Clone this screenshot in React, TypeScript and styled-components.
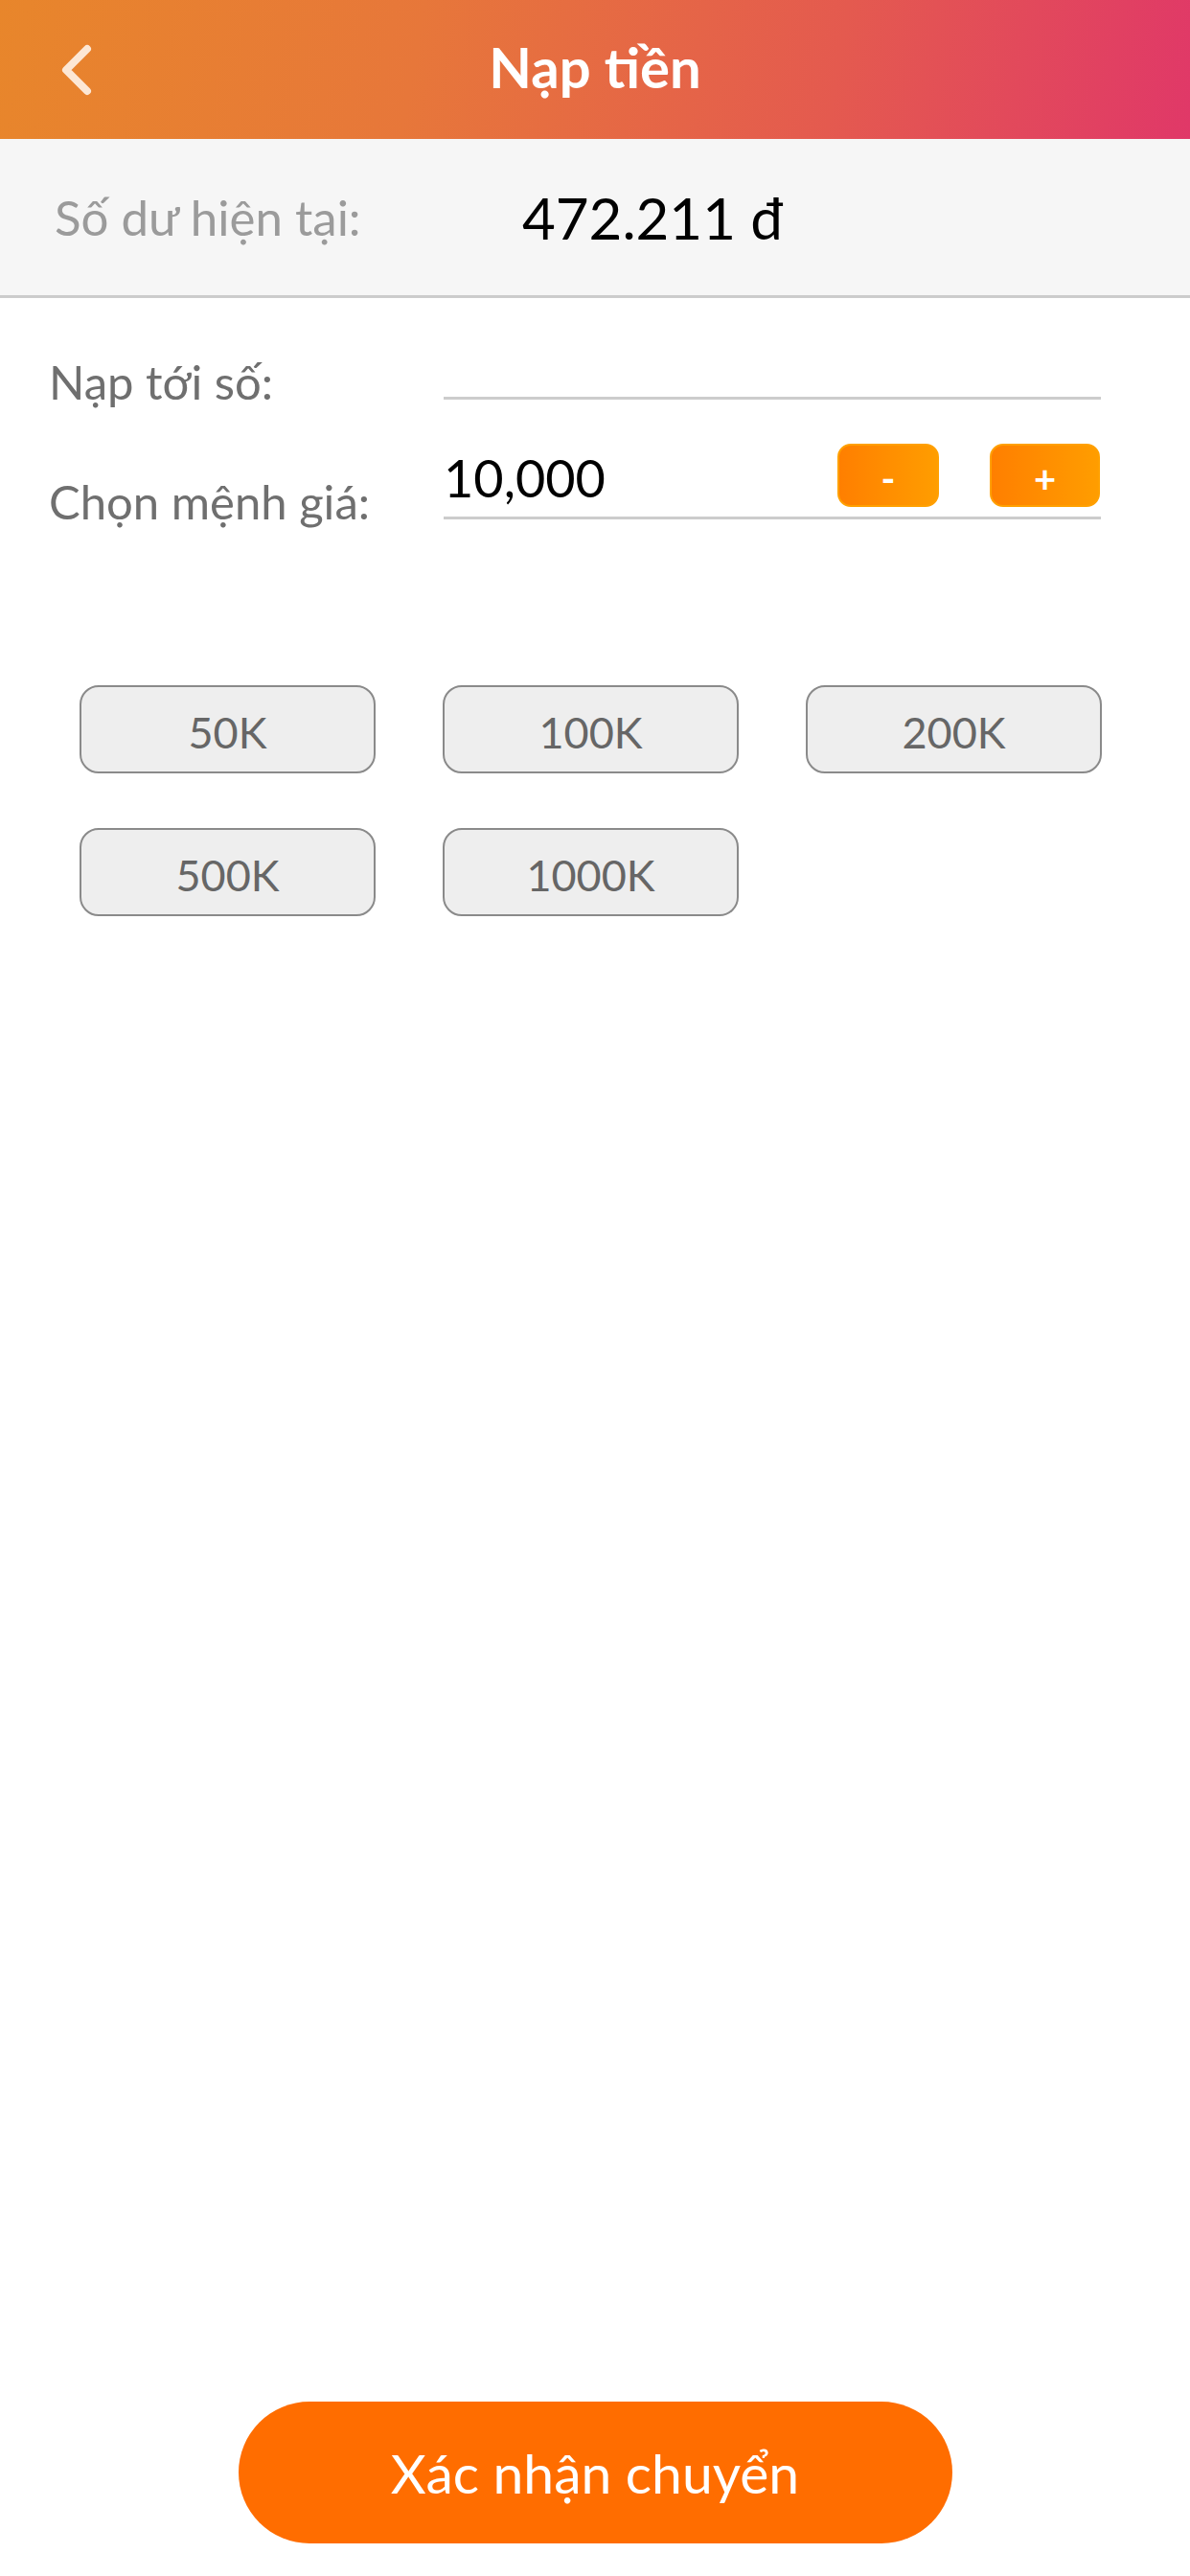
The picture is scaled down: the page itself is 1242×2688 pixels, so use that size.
import styled, { createGlobalStyle } from 'styled-components'

const GlobalStyle = createGlobalStyle`
  html, body {
    margin: 0;
    padding: 0;
    background: #ffffff;
  }
  * {
    box-sizing: border-box;
  }
`

const Screen = styled.div`
  width: 1242px;
  min-height: 2688px;
  display: flex;
  flex-direction: column;
  background: #ffffff;
  font-family: Lato, 'Noto Sans', sans-serif;
`

const Header = styled.header`
  height: 145px;
  display: grid;
  grid-template-columns: 160px 1fr 160px;
  align-items: center;
  background: linear-gradient(100deg, #e8862b 0%, #e7773a 35%, #e45a4f 70%, #e03868 100%);
`

const BackButton = styled.button`
  border: none;
  background: none;
  padding: 0 0 0 60px;
  height: 100%;
  display: flex;
  align-items: center;
  cursor: pointer;
`

const Title = styled.h1`
  margin: 0;
  text-align: center;
  color: #ffffff;
  font-size: 58px;
  font-weight: 700;
  padding-bottom: 6px;
`

const BalanceRow = styled.div`
  height: 166px;
  display: grid;
  grid-template-columns: 488px 1fr;
  align-items: center;
  padding: 0 0 0 57px;
  background: #f6f6f6;
  border-bottom: 3px solid #cccccc;
`

const BalanceLabel = styled.span`
  color: #9b9b9b;
  font-size: 51px;
`

const BalanceValue = styled.span`
  color: #000000;
  font-size: 60px;
`

const Form = styled.div`
  display: grid;
  grid-template-columns: 412px 686px;
  row-gap: 38px;
  padding: 36px 0 0 51px;
`

const FieldLabel = styled.label`
  align-self: end;
  color: #6f6f6f;
  font-size: 49px;
  line-height: 58px;
  margin-bottom: -10px;
`

const Field = styled.div<{ $tall?: boolean }>`
  height: ${(p) => (p.$tall ? '87px' : '70px')};
  display: flex;
  align-items: center;
  gap: 53px;
  padding: 8px 1px 10px 0;
  border-bottom: 3px solid #cccccc;
`

const FieldValue = styled.span`
  flex: 1;
  color: #000000;
  font-size: 54px;
  line-height: 66px;
  padding-top: 6px;
`

const StepButton = styled.button<{ $wide?: boolean }>`
  width: ${(p) => (p.$wide ? '115px' : '106px')};
  height: 66px;
  border-radius: 14px;
  border: 2px solid #ffa000;
  background: linear-gradient(90deg, #ff7f00 0%, #ff9d00 100%);
  color: #ffffff;
  font-family: Lato, sans-serif;
  font-size: 40px;
  font-weight: 700;
  line-height: 1;
  padding: 6px 0 0;
  cursor: pointer;
`

const Denominations = styled.div`
  display: grid;
  grid-template-columns: repeat(3, 309px);
  column-gap: 70px;
  row-gap: 57px;
  padding: 0 0 0 83px;
  margin-top: 173px;
`

const DenomButton = styled.button`
  height: 92px;
  border: 2px solid #8a8a8a;
  border-radius: 20px;
  background: #eeeeee;
  color: #666666;
  font-family: Lato, sans-serif;
  font-size: 45px;
  padding: 6px 0 0;
  cursor: pointer;
`

const Footer = styled.div`
  margin-top: auto;
  display: flex;
  justify-content: center;
  padding: 0 0 34px;
`

const ConfirmButton = styled.button`
  width: 745px;
  height: 148px;
  border: none;
  border-radius: 74px;
  background: #ff6d00;
  color: #ffffff;
  font-family: Lato, sans-serif;
  font-size: 57px;
  cursor: pointer;
`

const ChevronLeft = () => (
  <svg width="40" height="60" viewBox="0 0 40 60" fill="none">
    <path
      d="M31 8 L9 30 L31 52"
      stroke="#fde7d4"
      strokeWidth="8"
      strokeLinecap="round"
      strokeLinejoin="round"
    />
  </svg>
)

const denominations = ['50K', '100K', '200K', '500K', '1000K']

const App = () => {
  return (
    <>
      <GlobalStyle />
      <Screen>
        <Header>
          <BackButton aria-label="back">
            <ChevronLeft />
          </BackButton>
          <Title>Nạp tiền</Title>
          <div />
        </Header>
        <BalanceRow>
          <BalanceLabel>Số dư hiện tại:</BalanceLabel>
          <BalanceValue>472.211 đ</BalanceValue>
        </BalanceRow>
        <Form>
          <FieldLabel>Nạp tới số:</FieldLabel>
          <Field />
          <FieldLabel>Chọn mệnh giá:</FieldLabel>
          <Field $tall>
            <FieldValue>10,000</FieldValue>
            <StepButton>-</StepButton>
            <StepButton $wide>+</StepButton>
          </Field>
        </Form>
        <Denominations>
          {denominations.map((d) => (
            <DenomButton key={d}>{d}</DenomButton>
          ))}
        </Denominations>
        <Footer>
          <ConfirmButton>Xác nhận chuyển</ConfirmButton>
        </Footer>
      </Screen>
    </>
  )
}

export default App
